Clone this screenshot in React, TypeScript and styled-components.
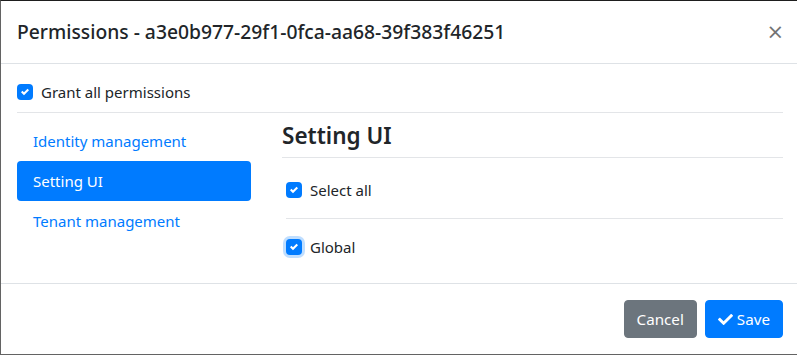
import React from "react"
import styled, { createGlobalStyle } from "styled-components"
import { FaCheck } from "react-icons/fa"

const GlobalStyle = createGlobalStyle`
  html, body {
    margin: 0;
    padding: 0;
    background: #5f5f5f;
    overflow: hidden;
  }
  body {
    font-family: "Noto Sans", "Open Sans", "Liberation Sans", sans-serif;
    font-size: 15px;
    line-height: 1.5;
    color: #212529;
  }
  * {
    box-sizing: border-box;
  }
`

const Modal = styled.div`
  width: 800px;
  background: #fff;
  background-clip: padding-box;
  border: 1px solid #636363;
  border-top-color: #1e1e1e;
  display: flex;
  flex-direction: column;
`

const Header = styled.div`
  display: flex;
  align-items: flex-start;
  justify-content: space-between;
  padding: 16px;
  border-bottom: 1px solid #dee2e6;
`

const Title = styled.h5`
  margin: 0;
  font-size: 19.3px;
  font-weight: 500;
  line-height: 30px;
`

const Close = styled.button`
  border: 0;
  background: none;
  padding: 0;
  margin-right: -1px;
  font-family: "DejaVu Sans", sans-serif;
  font-size: 21px;
  font-weight: 400;
  line-height: 30px;
  color: #000;
  opacity: 0.55;
`

const Body = styled.div`
  padding: 16px 16px 24px;
`

const Rule = styled.hr<{ $gap?: number }>`
  border: 0;
  border-top: 1px solid #e3e5e8;
  margin: ${p => p.$gap ?? 8}px 0;
`

const CheckRow = styled.label`
  display: flex;
  align-items: center;
  gap: 8px;
  height: 24px;
`

const Box = styled.span<{ $focus?: boolean }>`
  width: 16px;
  height: 16px;
  border-radius: 4px;
  background: #007bff;
  display: flex;
  align-items: center;
  justify-content: center;
  flex-shrink: 0;
  box-shadow: ${p => (p.$focus ? "0 0 0 3px rgba(0, 123, 255, 0.25)" : "none")};
`

const Columns = styled.div`
  display: grid;
  grid-template-columns: 234px 1fr;
  column-gap: 31px;
`

const Nav = styled.nav`
  display: flex;
  flex-direction: column;
`

const NavLink = styled.a<{ $active?: boolean }>`
  display: block;
  padding: 8px 16px;
  line-height: 24px;
  border-radius: 4px;
  color: ${p => (p.$active ? "#fff" : "#007bff")};
  background: ${p => (p.$active ? "#007bff" : "transparent")};
  text-decoration: none;
`

const Section = styled.div`
  display: flex;
  flex-direction: column;
`

const Heading = styled.h4`
  margin: 0 0 7px;
  font-size: 22.5px;
  font-weight: 600;
  line-height: 29px;
`

const HeadRule = styled.div`
  border-top: 1px solid #e3e5e8;
  margin-bottom: 20px;
`

const List = styled.div`
  padding-left: 4px;
`

const Footer = styled.div`
  display: flex;
  justify-content: flex-end;
  gap: 8px;
  padding: 16px;
  border-top: 1px solid #dee2e6;
`

const Button = styled.button<{ $variant: "secondary" | "primary" }>`
  display: inline-flex;
  align-items: center;
  gap: 4px;
  height: 38px;
  padding: 6px 12px;
  border: 1px solid ${p => (p.$variant === "primary" ? "#007bff" : "#6c757d")};
  background: ${p => (p.$variant === "primary" ? "#007bff" : "#6c757d")};
  color: #fff;
  border-radius: 4px;
  font-family: inherit;
  font-size: 15.2px;
  line-height: 24px;
`

const Tick = () => (
  <svg width="8" height="8" viewBox="0 0 8 8">
    <path fill="#fff" d="M6.564.75l-3.59 3.612-1.538-1.55L0 4.26 2.974 7.25 8 2.193z" />
  </svg>
)

const Check = ({ label, focus }: { label: string; focus?: boolean }) => (
  <CheckRow>
    <Box $focus={focus}>
      <Tick />
    </Box>
    {label}
  </CheckRow>
)

export default function App() {
  return (
    <>
      <GlobalStyle />
      <Modal>
        <Header>
          <Title>Permissions - a3e0b977-29f1-0fca-aa68-39f383f46251</Title>
          <Close>×</Close>
        </Header>
        <Body>
          <Check label="Grant all permissions" />
          <Rule />
          <Columns>
            <Nav>
              <NavLink>Identity management</NavLink>
              <NavLink $active>Setting UI</NavLink>
              <NavLink>Tenant management</NavLink>
            </Nav>
            <Section>
              <Heading>Setting UI</Heading>
              <HeadRule />
              <List>
                <Check label="Select all" />
                <Rule $gap={16} />
                <Check label="Global" focus />
              </List>
            </Section>
          </Columns>
        </Body>
        <Footer>
          <Button $variant="secondary">Cancel</Button>
          <Button $variant="primary">
            <FaCheck size={15} />
            Save
          </Button>
        </Footer>
      </Modal>
    </>
  )
}
